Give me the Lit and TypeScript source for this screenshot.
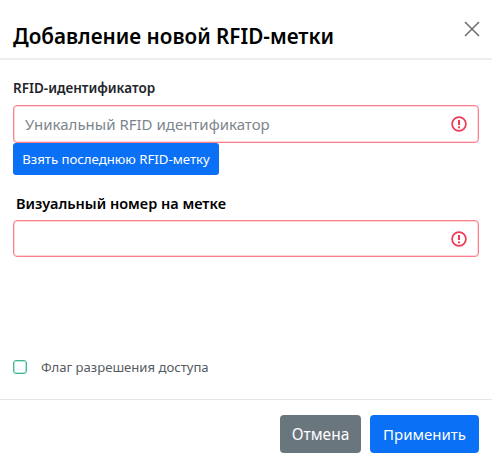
import { LitElement, html, css } from "lit";
import { customElement } from "lit/decorators.js";

const alert = html`<svg class="alert" viewBox="0 0 16 16" width="16" height="16" fill="none" aria-hidden="true">
  <circle cx="8" cy="8" r="6.9" stroke-width="1.7" stroke="#ee3a52"></circle>
  <path d="M8 3.9v5" stroke-width="2" stroke="#ee3a52"></path>
  <circle cx="8" cy="11.4" r="1.1" fill="#ee3a52"></circle>
</svg>`;

@customElement("app-root")
export class AppRoot extends LitElement {
  static styles = css`
    :host {
      display: block;
      width: 492px;
      height: 467px;
      background: #fff;
      font-family: "Noto Sans", "Open Sans", sans-serif;
      color: #212529;
      overflow: hidden;
    }
    .dialog {
      display: flex;
      flex-direction: column;
      height: 467px;
    }
    .header {
      height: 60px;
      box-sizing: border-box;
      border-bottom: 2px solid #eeeeee;
      display: flex;
      justify-content: space-between;
      padding: 0 12px 0 13px;
    }
    h1 {
      margin: 22px 0 0;
      font-size: 20.7px;
      line-height: 28px;
      font-weight: 600;
      color: #000;
    }
    .close {
      margin: 21px 0 0;
      padding: 0;
      width: 16px;
      height: 16px;
      border: 0;
      background: none;
      display: block;
    }
    .body {
      flex: 1;
      display: flex;
      flex-direction: column;
      padding: 18px 13px 0;
    }
    label.title {
      display: block;
      font-size: 13.5px;
      line-height: 20px;
      font-weight: 600;
      color: #212529;
    }
    label.second {
      margin: 18px 0 7px 3px;
      color: #000;
      font-size: 14.5px;
    }
    .field {
      height: 37px;
      box-sizing: border-box;
      border: 1px solid #fb7f8c;
      box-shadow: inset 0 0 0 1px rgba(255, 138, 150, 0.35);
      border-radius: 4px;
      display: flex;
      align-items: center;
      justify-content: space-between;
      padding: 0 11px 0 11px;
    }
    .first {
      margin-top: 7px;
      height: 38px;
    }
    .placeholder {
      font-size: 15px;
      color: #7d858c;
    }
    .take {
      align-self: flex-start;
      height: 32px;
      width: 206px;
      box-sizing: border-box;
      border: 0;
      border-radius: 3px;
      background: #0a70f5;
      color: #fff;
      font: 13.2px "Noto Sans", sans-serif;
      padding: 0;
    }
    .check {
      margin-top: auto;
      margin-bottom: 24px;
      display: flex;
      align-items: center;
      font-size: 13.1px;
      line-height: 16px;
      color: #555b60;
    }
    .box {
      width: 12px;
      height: 12px;
      border: 1px solid #3db597;
      box-shadow: inset 0 0 0 1px rgba(61, 181, 151, 0.35);
      border-radius: 3px;
      margin-right: 14px;
    }
    .footer {
      height: 68px;
      box-sizing: border-box;
      border-top: 1px solid #e6e6e6;
      display: flex;
      justify-content: flex-end;
      gap: 9px;
      padding: 15px 13px 0;
    }
    .footer button {
      height: 38px;
      box-sizing: border-box;
      border: 0;
      border-radius: 4px;
      color: #fff;
      font: 15.5px "Noto Sans", sans-serif;
      padding: 0;
    }
    .footer .apply {
      width: 109px;
      background: #0a70f5;
      font-size: 15px;
    }
    .cancel {
      width: 81px;
      background: #6a767d;
    }
  `;

  render() {
    return html`
      <div class="dialog">
        <div class="header">
          <h1>Добавление новой RFID-метки</h1>
          <button class="close" aria-label="Закрыть">
            <svg viewBox="0 0 16 16" width="16" height="16" fill="none" stroke="#6d6d6d" stroke-width="1.5">
              <path d="M1 1l14 14M15 1L1 15"></path>
            </svg>
          </button>
        </div>
        <div class="body">
          <label class="title">RFID-идентификатор</label>
          <div class="field first">
            <span class="placeholder">Уникальный RFID идентификатор</span>
            ${alert}
          </div>
          <button class="take">Взять последнюю RFID-метку</button>
          <label class="title second">Визуальный номер на метке</label>
          <div class="field">
            <span></span>
            ${alert}
          </div>
          <div class="check">
            <span class="box"></span>
            <span>Флаг разрешения доступа</span>
          </div>
        </div>
        <div class="footer">
          <button class="cancel">Отмена</button>
          <button class="apply">Применить</button>
        </div>
      </div>
    `;
  }
}
